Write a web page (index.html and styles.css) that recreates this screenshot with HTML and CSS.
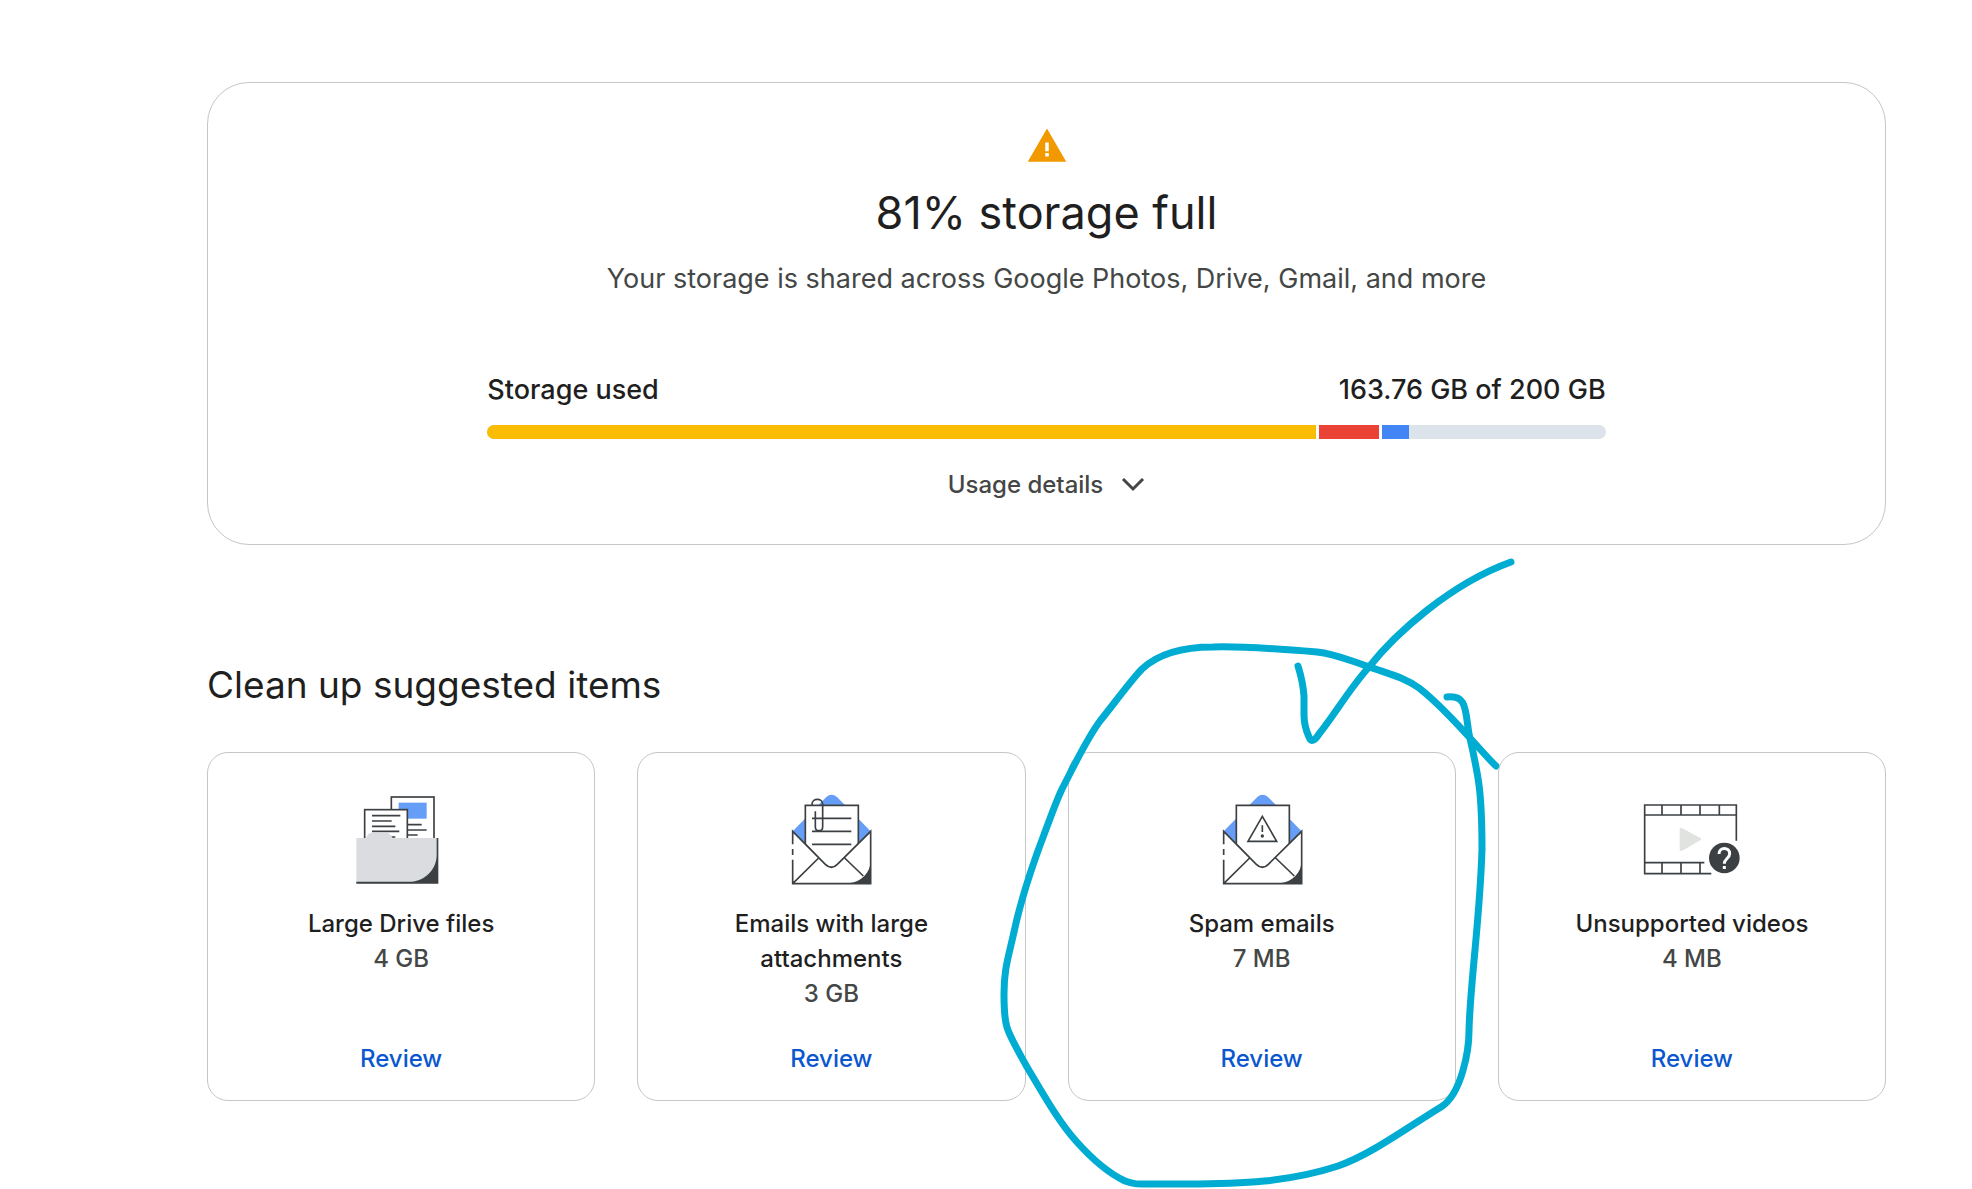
FILE: index.html
```html
<!DOCTYPE html>
<html lang="en">

<head>
  <meta charset="UTF-8">
  <meta name="viewport" content="width=device-width, initial-scale=1.0">
  <title>Storage</title>
  <link rel="stylesheet" href="styles.css">
</head>

<body>
  <main class="wrapper">
    <section class="storage">
      <svg class="warning" viewBox="0 0 24 24" aria-hidden="true">
        <path d="M1 21h22L12 2 1 21zm12-3h-2v-2h2v2zm0-3h-2v-5h2v5z" />
      </svg>
      <h1>81% storage full</h1>
      <p>Your storage is shared across Google Photos, Drive, Gmail, and more</p>
      <div class="usage">
        <div class="usage-labels">
          <span>Storage used</span>
          <span>163.76 GB of 200 GB</span>
        </div>
        <div class="bar">
          <div class="photos" style="width: 74.1%"></div>
          <div class="gmail" style="width: 5.4%"></div>
          <div class="drive" style="width: 2.4%"></div>
        </div>
      </div>
      <button class="details">
        Usage details
        <svg viewBox="0 0 24 14" aria-hidden="true"><path d="M2 1l10 10L22 1" /></svg>
      </button>
    </section>

    <h2>Clean up suggested items</h2>
    <section class="cards">
      <article class="card">
        <svg class="icon" viewBox="4 0 360 360" aria-hidden="true">
          <rect class="line fill" x="155" y="54" width="128" height="150" />
          <rect class="blue" x="177" y="71" width="84" height="48" />
          <path class="line" d="M200 137h46M200 153h61M200 168h34" />
          <rect class="line fill" x="75" y="92" width="128" height="120" />
          <path class="line" d="M97 110h85M97 126h59M97 142h70M97 157h82M155 174h12" />
          <path class="gray" d="M50 177h30c2-10 8-16 18-16h40c10 0 16 6 20 16h137v136H50z" />
          <path class="dark" d="M50 308h165c45-4 75-40 76-78V177h5v137H50z" />
        </svg>
        <h3>Large Drive files</h3>
        <span class="size">4 GB</span>
        <a href="#">Review</a>
      </article>

      <article class="card">
        <svg class="icon" viewBox="4 0 360 360" aria-hidden="true">
          <path class="blue" d="M69 157L170 54q15-14 32 0L303 157l-60 60H125z" />
          <path class="line fill" d="M107 196V79h159v117l-60 60q-20 18-42 0z" />
          <path class="line" d="M127 118h118M127 157h118M127 196h118" />
          <path class="line" d="M127 80v-4c0-20 32-20 32 0v67c0 16-22 16-22 0V97" />
          <path class="fill" d="M69 157l96 97q20 20 40 0l98-97v157H69z" />
          <path class="line" d="M69 196v-39l98 99q18 18 36 0l100-99v157H69v-72M69 210v18M69 314l78-77M225 237l56 54" />
          <path class="dark" d="M236 313c40-4 66-32 67-68v70z" />
        </svg>
        <h3>Emails with large attachments</h3>
        <span class="size">3 GB</span>
        <a href="#">Review</a>
      </article>

      <article class="card">
        <svg class="icon" viewBox="4 0 360 360" aria-hidden="true">
          <path class="blue" d="M69 157L170 54q15-14 32 0L303 157l-60 60H125z" />
          <path class="line fill" d="M107 196V79h159v117l-60 60q-20 18-42 0z" />
          <path class="line" d="M185 112l43 75h-86zM185 139v20" />
          <circle class="dark" cx="185" cy="171" r="5" />
          <path class="fill" d="M69 157l96 97q20 20 40 0l98-97v157H69z" />
          <path class="line" d="M69 196v-39l98 99q18 18 36 0l100-99v157H69v-72M69 210v18M69 314l78-77M225 237l56 54" />
          <path class="dark" d="M236 313c40-4 66-32 67-68v70z" />
        </svg>
        <h3>Spam emails</h3>
        <span class="size">7 MB</span>
        <a href="#">Review</a>
        <!-- pen marks -->
        <svg class="marks" viewBox="1000 555 520 630" aria-hidden="true">
          <path d="M1496 767C1480 752 1450 713 1419 689C1402 677 1385 674 1367 667C1345 660 1335 655 1317 653C1280 650 1240 647 1213 648C1180 648 1158 655 1142 670C1132 680 1113 706 1100 722C1086 741 1075 765 1062 790C1055 805 1050 820 1045 833C1030 872 1020 905 1014 933C1008 960 1004 970 1004 995C1004 1030 1006 1030 1027 1068C1042 1093 1058 1122 1076 1142C1092 1160 1108 1174 1125 1182C1133 1185 1137 1185 1145 1185H1187C1240 1185 1290 1183 1338 1167C1370 1156 1405 1130 1441 1108C1462 1095 1469 1050 1469 1032C1470 985 1480 920 1482 850C1482 790 1478 775 1469 735C1465 710 1467 696 1447 698" />
          <path d="M1511 563C1450 585 1395 635 1369 668C1350 689 1335 715 1319 735Q1312 746 1309 738Q1304 727 1304 716V697Q1303 683 1298 667" />
        </svg>
      </article>

      <article class="card">
        <svg class="icon" viewBox="4 -30 360 360" aria-hidden="true">
          <path class="line" d="M317 155V48H42v206h200M42 78h275M42 221h179M94 48v30M151 48v30M208 48v30M266 48v30M94 221v33M151 221v33M208 221v33" />
          <path class="play" d="M147 122q0-8 8-4l54 29q6 4 0 7l-54 31q-8 4-8-4z" />
          <circle class="dark" cx="281" cy="207" r="46" />
          <path class="question" d="M265 195c0-22 32-22 32-1 0 14-16 15-16 30M281 231v9" />
        </svg>
        <h3>Unsupported videos</h3>
        <span class="size">4 MB</span>
        <a href="#">Review</a>
      </article>
    </section>
  </main>
</body>

</html>
```
FILE: styles.css
```css
* {
  box-sizing: border-box;
}

body {
  min-height: 100vh;
  background: #fff;
  color: #1f1f1f;
  font-family: Inter, Roboto, sans-serif;
  font-size: 24px;
  line-height: 35px;
  margin: 0;
}

h1, h2, h3, p {
  margin: 0;
  font-weight: 400;
}

.wrapper {
  padding: 82px 86px 0 207px;
}

.storage {
  display: flex;
  flex-direction: column;
  align-items: center;
  padding: 42px;
  border: 1px solid #c4c7c5;
  border-radius: 42px;
}

.warning {
  width: 42px;
  height: 42px;
  fill: #f29900;
}

h1 {
  margin-top: 14px;
  font-size: 45px;
  line-height: 63px;
}

.storage p {
  margin-top: 14px;
  color: #444746;
  font-size: 27px;
  line-height: 42px;
}

.usage {
  width: 70.2%;
  margin-top: 69px;
}

.usage-labels {
  display: flex;
  justify-content: space-between;
  font-size: 27px;
  font-weight: 500;
  line-height: 42px;
}

.bar {
  display: flex;
  height: 14px;
  margin-top: 14px;
  background: #dde3ea;
  border-radius: 7px;
  overflow: hidden;
}

.bar div {
  box-sizing: content-box;
  border-right: 3px solid #fff;
}

.photos {
  background: #fbbc04;
}

.gmail {
  background: #ea4335;
}

.bar .drive {
  background: #4285f4;
  border: 0;
}

.details {
  display: flex;
  align-items: center;
  gap: 18px;
  margin-top: 28px;
  padding: 0;
  border: 0;
  background: none;
  color: #444746;
  font: inherit;
  font-weight: 500;
  cursor: pointer;
}

.details svg {
  width: 24px;
  height: 14px;
  fill: none;
  stroke: #444746;
  stroke-width: 3;
}

h2 {
  margin: 115px 0 43px;
  font-size: 37px;
  line-height: 49px;
}

.cards {
  display: grid;
  grid-template-columns: repeat(4, 1fr);
  gap: 42px;
}

.card {
  position: relative;
  display: flex;
  flex-direction: column;
  align-items: center;
  padding: 26px 70px 24px;
  border: 1px solid #c4c7c5;
  border-radius: 21px;
  text-align: center;
  font-weight: 500;
}

.icon {
  width: 120px;
  height: 120px;
  margin-bottom: 7px;
}

h3 {
  font-size: 24px;
  font-weight: 500;
}

.size {
  color: #444746;
}

.card a {
  margin-top: auto;
  padding-top: 30px;
  color: #0b57d0;
  text-decoration: none;
}

.line {
  fill: none;
  stroke: #3c4043;
  stroke-width: 5;
}

.fill {
  fill: #fff;
}

.blue {
  fill: #669df6;
}

.gray {
  fill: #dadce0;
}

.dark {
  fill: #3c4043;
}

.play {
  fill: #e1e3e1;
}

.question {
  fill: none;
  stroke: #fff;
  stroke-width: 9;
}

.marks {
  position: absolute;
  top: -199px;
  left: -69px;
  width: 520px;
  height: 630px;
  overflow: visible;
  pointer-events: none;
  fill: none;
  stroke: #00acd1;
  stroke-width: 7;
  stroke-linecap: round;
  stroke-linejoin: round;
}
```
